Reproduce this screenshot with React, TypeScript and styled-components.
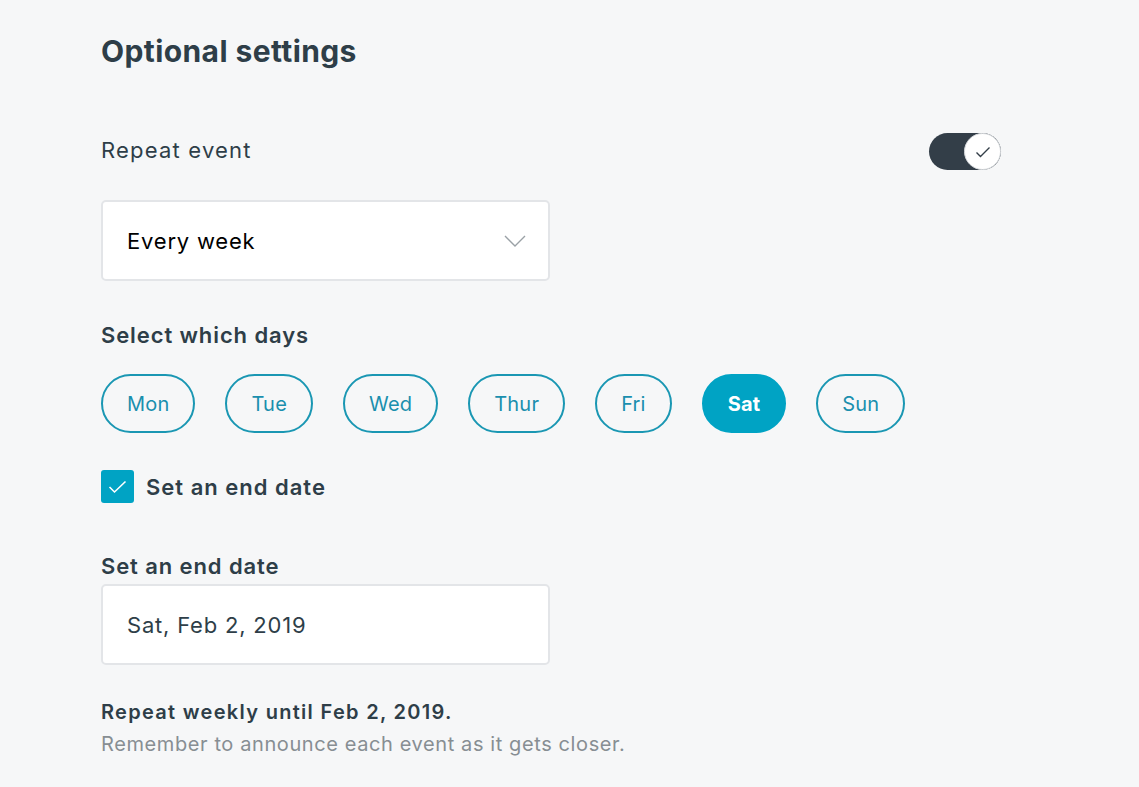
import styled, { createGlobalStyle } from 'styled-components'

const GlobalStyle = createGlobalStyle`
	html, body {
		margin: 0;
		padding: 0;
		background: #f6f7f8;
	}
	body {
		font-family: Inter, "Noto Sans", sans-serif;
		color: #2e3e48;
		-webkit-font-smoothing: antialiased;
	}
`

const Page = styled.div`
	width: 900px;
	padding: 28px 0 40px 101px;
	display: flex;
	flex-direction: column;
`

const Heading = styled.h2`
	margin: 0;
	font-size: 30px;
	font-weight: 700;
	line-height: 46px;
	letter-spacing: 0.4px;
`

const ToggleRow = styled.div`
	display: flex;
	align-items: center;
	justify-content: space-between;
	margin-top: 59px;
	height: 37px;
`

const RowLabel = styled.span`
	font-size: 22px;
	font-weight: 400;
	letter-spacing: 1.2px;
	margin-bottom: 4px;
`

const Track = styled.div<{ on: boolean }>`
	width: 72px;
	height: 37px;
	border-radius: 19px;
	background: ${p => (p.on ? '#333e48' : '#d4d8db')};
	display: flex;
	justify-content: ${p => (p.on ? 'flex-end' : 'flex-start')};
`

const Knob = styled.div`
	width: 37px;
	height: 37px;
	box-sizing: border-box;
	border-radius: 50%;
	background: #fff;
	border: 1px solid #d7dadd;
	display: flex;
	align-items: center;
	justify-content: center;
`

const Field = styled.div`
	box-sizing: border-box;
	width: 449px;
	height: 81px;
	background: #fff;
	border: 2px solid #e3e5e8;
	border-radius: 5px;
	display: flex;
	align-items: center;
	justify-content: space-between;
	padding: 0 22px 0 24px;
	font-size: 22px;
	letter-spacing: 0.8px;
`

const SelectField = styled(Field)`
	margin-top: 30px;
	color: #000;
`

const SectionLabel = styled.div`
	font-size: 22px;
	font-weight: 600;
	line-height: 28px;
	letter-spacing: 0.9px;
`

const DaysLabel = styled(SectionLabel)`
	margin-top: 40px;
`

const Days = styled.div`
	display: flex;
	gap: 30px;
	margin-top: 25px;
`

const DayPill = styled.button<{ selected?: boolean }>`
	box-sizing: border-box;
	height: 59px;
	padding: 0 24px;
	border-radius: 30px;
	border: 2px solid ${p => (p.selected ? '#00a3c4' : '#1a97b3')};
	background: ${p => (p.selected ? '#00a3c4' : 'transparent')};
	color: ${p => (p.selected ? '#fff' : '#1a8fae')};
	font-family: inherit;
	font-size: 20px;
	letter-spacing: 0.2px;
	font-weight: ${p => (p.selected ? 700 : 400)};
	cursor: pointer;
`

const CheckRow = styled.label`
	display: flex;
	align-items: center;
	gap: 12px;
	margin-top: 37px;
	font-size: 22px;
	font-weight: 600;
	letter-spacing: 1px;
`

const CheckBox = styled.span`
	width: 33px;
	height: 33px;
	border-radius: 3px;
	background: #00a3c4;
	display: flex;
	align-items: center;
	justify-content: center;
`

const EndLabel = styled(SectionLabel)`
	margin-top: 49px;
`

const DateField = styled(Field)`
	margin-top: 4px;
`

const Summary = styled.div`
	margin-top: 34px;
	font-size: 20px;
	font-weight: 600;
	line-height: 26px;
	letter-spacing: 1.3px;
`

const Hint = styled.div`
	margin-top: 6px;
	font-size: 20px;
	color: #878e93;
	line-height: 26px;
	letter-spacing: 0.6px;
`

const days = ['Mon', 'Tue', 'Wed', 'Thur', 'Fri', 'Sat', 'Sun']

export default function App() {
	return (
		<>
			<GlobalStyle />
			<Page>
				<Heading>Optional settings</Heading>
				<ToggleRow>
					<RowLabel>Repeat event</RowLabel>
					<Track on>
						<Knob>
							<svg width="16" height="12" viewBox="0 0 16 12" fill="none">
								<path d="M1.5 6.5 L5.5 10.5 L14.5 1.5" stroke="#333e48" strokeWidth="1.4" />
							</svg>
						</Knob>
					</Track>
				</ToggleRow>
				<SelectField>
					<span>Every week</span>
					<svg width="22" height="12" viewBox="0 0 22 12" fill="none">
						<path d="M1 1 L11 11 L21 1" stroke="#9aa1a6" strokeWidth="1.4" />
					</svg>
				</SelectField>
				<DaysLabel>Select which days</DaysLabel>
				<Days>
					{days.map(d => (
						<DayPill key={d} selected={d === 'Sat'}>{d}</DayPill>
					))}
				</Days>
				<CheckRow>
					<CheckBox>
						<svg width="19" height="14" viewBox="0 0 19 14" fill="none">
							<path d="M1.5 7 L6.5 12 L17.5 1.5" stroke="#fff" strokeWidth="1.6" />
						</svg>
					</CheckBox>
					Set an end date
				</CheckRow>
				<EndLabel>Set an end date</EndLabel>
				<DateField>Sat, Feb 2, 2019</DateField>
				<Summary>Repeat weekly until Feb 2, 2019.</Summary>
				<Hint>Remember to announce each event as it gets closer.</Hint>
			</Page>
		</>
	)
}
